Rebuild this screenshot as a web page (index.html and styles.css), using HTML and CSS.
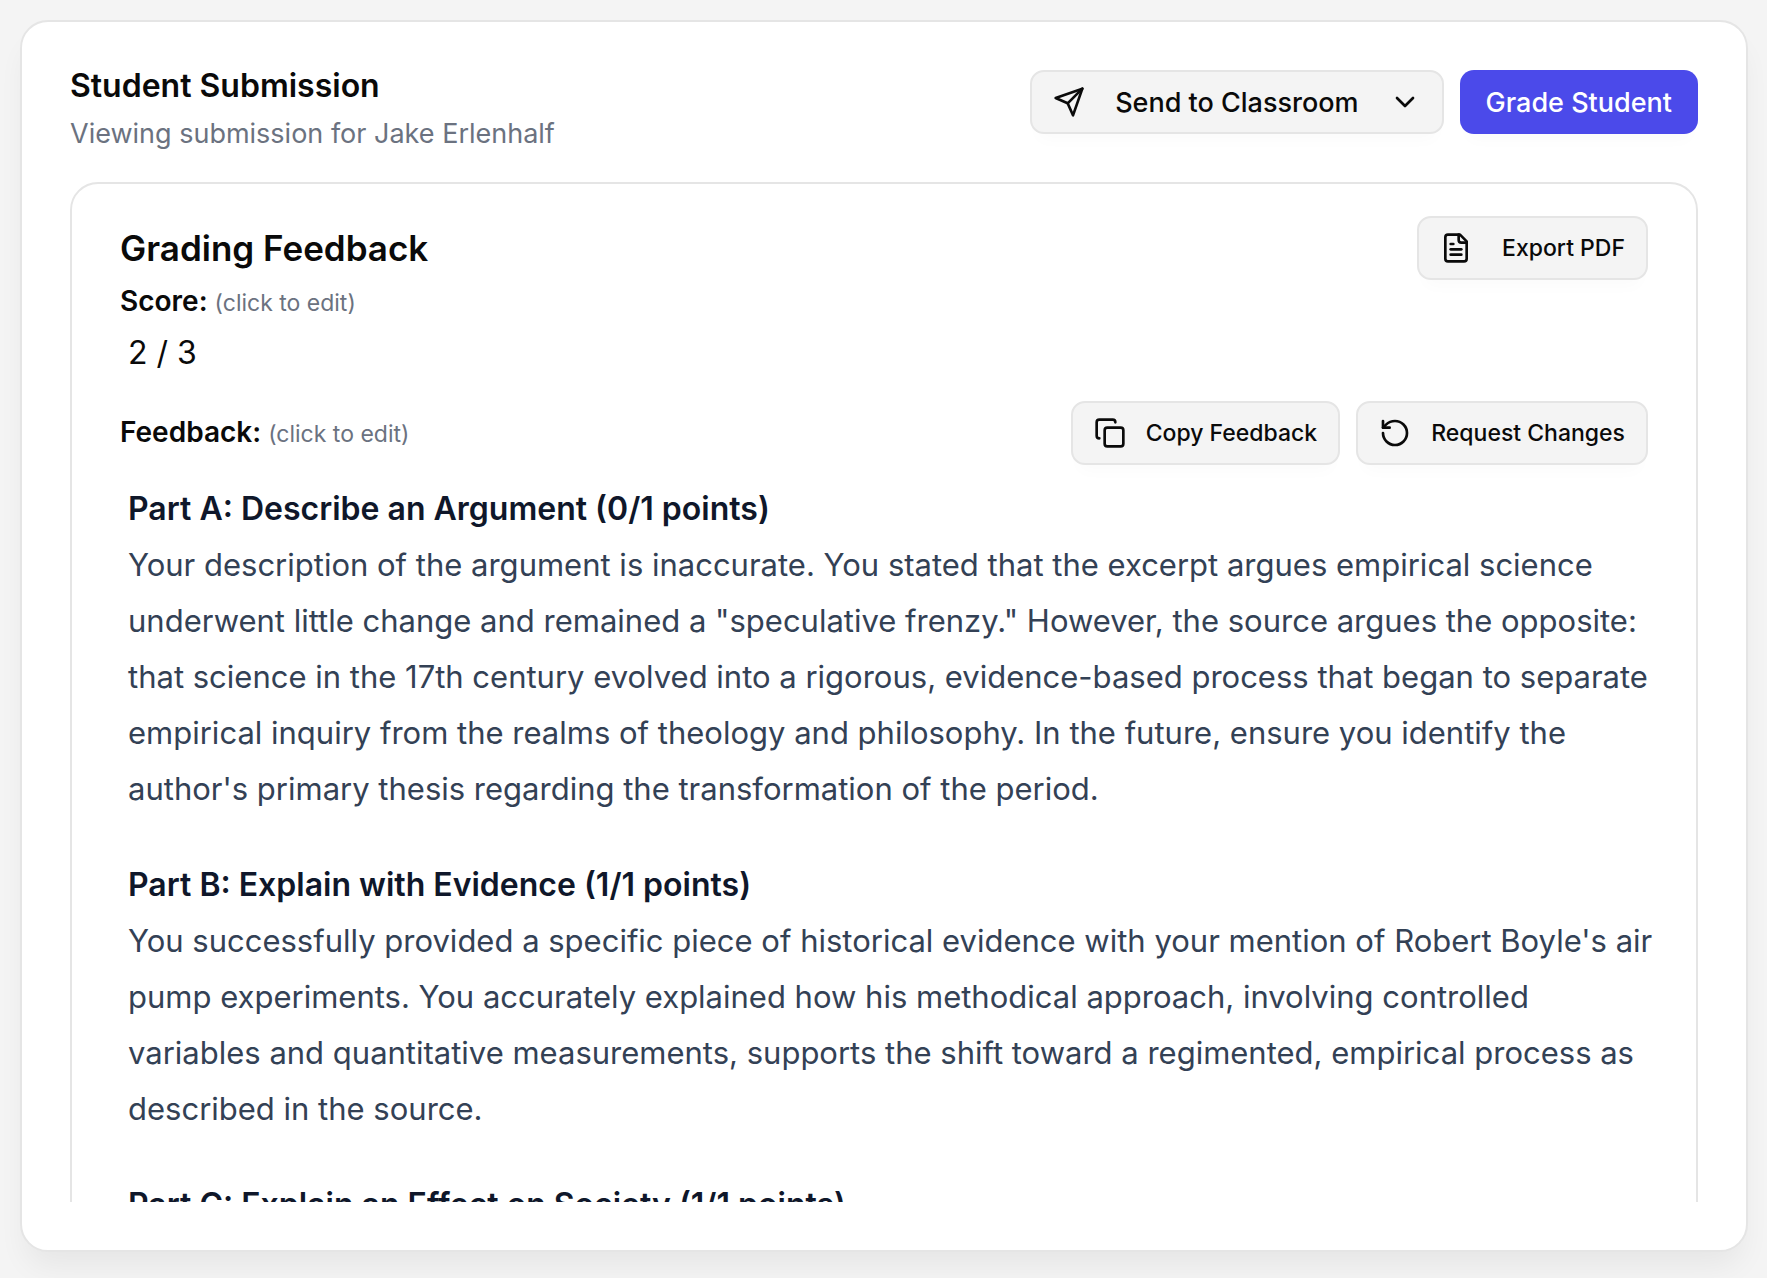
FILE: index.html
```html
<!DOCTYPE html>
<html lang="en">
<head>
    <meta charset="UTF-8">
    <meta name="viewport" content="width=device-width, initial-scale=1.0">
    <title>Student Submission</title>
    <link rel="stylesheet" href="styles.css">
</head>
<body>

<main class="card">
    <header class="card-header">
        <div class="heading">
            <h1>Student Submission</h1>
            <p class="subtitle">Viewing submission for Jake Erlenhalf</p>
        </div>
        <div class="actions">
            <button type="button" class="btn btn-wide">
                <svg class="icon" viewBox="0 0 24 24"><path d="m22 2-7 20-4-9-9-4Z"/><path d="M22 2 11 13"/></svg>
                <span>Send to Classroom</span>
                <svg class="icon" viewBox="0 0 24 24"><path d="m6 9 6 6 6-6"/></svg>
            </button>
            <button type="button" class="btn btn-primary">Grade Student</button>
        </div>
    </header>

    <div class="scroll-area">
        <section class="panel">
            <div class="row">
                <h2>Grading Feedback</h2>
                <button type="button" class="btn btn-small btn-wide">
                    <svg class="icon" viewBox="0 0 24 24"><path d="M15 2H6a2 2 0 0 0-2 2v16a2 2 0 0 0 2 2h12a2 2 0 0 0 2-2V7Z"/><path d="M14 2v4a2 2 0 0 0 2 2h4"/><path d="M10 9H8"/><path d="M16 13H8"/><path d="M16 17H8"/></svg>
                    <span>Export PDF</span>
                </button>
            </div>

            <p class="label">Score: <span class="hint">(click to edit)</span></p>
            <p class="score">2 / 3</p>

            <div class="row">
                <p class="label">Feedback: <span class="hint">(click to edit)</span></p>
                <div class="actions">
                    <button type="button" class="btn btn-small">
                        <svg class="icon" viewBox="0 0 24 24"><rect width="14" height="14" x="8" y="8" rx="2" ry="2"/><path d="M4 16c-1.1 0-2-.9-2-2V4c0-1.1.9-2 2-2h10c1.1 0 2 .9 2 2"/></svg>
                        <span>Copy Feedback</span>
                    </button>
                    <button type="button" class="btn btn-small">
                        <svg class="icon" viewBox="0 0 24 24"><path d="M3 12a9 9 0 1 0 9-9 9.75 9.75 0 0 0-6.74 2.74L3 8"/><path d="M3 3v5h5"/></svg>
                        <span>Request Changes</span>
                    </button>
                </div>
            </div>

            <div class="feedback">
                <h3>Part A: Describe an Argument (0/1 points)</h3>
                <p>Your description of the argument is inaccurate. You stated that the excerpt argues empirical science underwent little change and remained a "speculative frenzy." However, the source argues the opposite: that science in the 17th century evolved into a rigorous, evidence-based process that began to separate empirical inquiry from the realms of theology and philosophy. In the future, ensure you identify the author's primary thesis regarding the transformation of the period.</p>
                <h3>Part B: Explain with Evidence (1/1 points)</h3>
                <p>You successfully provided a specific piece of historical evidence with your mention of Robert Boyle's air pump experiments. You accurately explained how his methodical approach, involving controlled variables and quantitative measurements, supports the shift toward a regimented, empirical process as described in the source.</p>
                <h3>Part C: Explain an Effect on Society (1/1 points)</h3>
            </div>
        </section>
    </div>
</main>

</body>
</html>
```
FILE: styles.css
```css
* {
    box-sizing: border-box;
}
body {
    font-family: Inter, "Liberation Sans", sans-serif;
    background-color: #f4f4f4;
    color: #0a0a0a;
    height: 100vh;
    margin: 0;
    padding: 20px 19px 26px 20px;
}
h1, h2, h3, p {
    margin: 0;
}
.card {
    display: flex;
    flex-direction: column;
    height: 100%;
    padding: 48px;
    background: #fff;
    border: 2px solid #e5e5e5;
    border-radius: 28px;
    box-shadow: 0 20px 30px -6px rgba(0, 0, 0, 0.06);
}
.card-header {
    display: flex;
    justify-content: space-between;
    align-items: flex-start;
    padding-bottom: 28px;
}
h1 {
    font-size: 32px;
    font-weight: 600;
    line-height: 32px;
}
.subtitle {
    margin-top: 12px;
    font-size: 27px;
    line-height: 40px;
    color: #6b7280;
}
.actions {
    display: flex;
    gap: 16px;
}
.btn {
    display: flex;
    align-items: center;
    gap: 20px;
    height: 64px;
    padding: 0 21px;
    background: #f4f4f4;
    border: 2px solid #e5e5e5;
    border-radius: 14px;
    box-shadow: 0 14px 16px -8px rgba(0, 0, 0, 0.02);
    color: #0a0a0a;
    font-family: inherit;
    font-size: 27px;
    font-weight: 500;
    cursor: pointer;
}
.btn-primary {
    padding: 0 26px;
    background: #4b4aea;
    border: none;
    color: #fff;
}
.btn-small {
    font-size: 23px;
}
.btn-wide {
    gap: 30px;
}
.icon {
    width: 32px;
    height: 32px;
    fill: none;
    stroke: currentColor;
    stroke-width: 2;
    stroke-linecap: round;
    stroke-linejoin: round;
}
.scroll-area {
    flex: 1;
    min-height: 0;
    overflow: hidden;
}
.panel {
    padding: 32px 48px;
    border: 2px solid #e5e5e5;
    border-radius: 28px;
}
.row {
    display: flex;
    justify-content: space-between;
    align-items: center;
}
h2 {
    font-size: 35px;
    font-weight: 600;
    line-height: 40px;
}
.label {
    font-size: 28px;
    font-weight: 600;
    line-height: 42px;
}
.hint {
    font-size: 23px;
    font-weight: 400;
    color: #6b7280;
}
.score {
    margin-bottom: 16px;
    padding: 6px 8px 9px;
    font-size: 32px;
    line-height: 46px;
}
/* the text runs slightly past the button column on the right */
.feedback {
    margin-right: -8px;
    padding: 16px 0 16px 8px;
    font-size: 31px;
    line-height: 56px;
    color: #334155;
}
.feedback h3 {
    font-size: 32px;
    font-weight: 600;
    color: #0f172a;
}
.feedback p {
    margin-bottom: 40px;
}
```
